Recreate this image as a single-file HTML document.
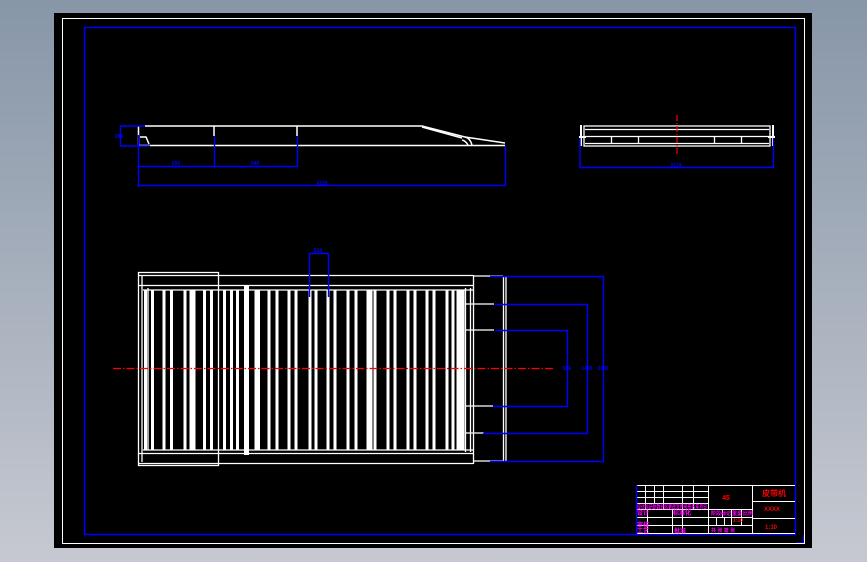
<!DOCTYPE html>
<html><head><meta charset="utf-8"><style>
html,body{margin:0;padding:0;width:867px;height:562px;overflow:hidden;background:linear-gradient(#8796a8,#c6c9d1);}
svg{position:absolute;left:0;top:0}
text{font-family:"Liberation Sans","Noto Sans CJK SC",sans-serif}
</style></head><body>
<svg width="867" height="562" viewBox="0 0 867 562">
<rect x="54" y="13" width="758" height="535" fill="#000"/>
<rect x="62.5" y="18.5" width="742" height="525" fill="none" stroke="#fff" stroke-width="1"/>
<rect x="84.5" y="27.5" width="711" height="507" fill="none" stroke="#0000ff" stroke-width="1.5"/>
<path d="M796 542.5H803.5V535" stroke="#00f" fill="none"/>

<!-- side view -->
<g stroke="#fff" fill="none" stroke-width="1.5">
<path d="M145 126H422L465 137L505 143"/>
<path d="M138 145.5H505M138.5 126V145M214 126V136M297 126V136"/>
<path d="M422 127L462 138M465 137Q470 138 472 145M462 140Q466 141 468 145M140 137H146L149 144"/>
</g>
<g stroke="#0000ff" fill="none" stroke-width="1.4">
<path d="M120 126H145M120 146H150M120.5 126V146"/>
<path d="M138.5 135V187M214.5 136V167M297.5 136V167M138 166.5H297M138 185.5H505M505.5 146V186"/>
</g>
<g fill="#0000ff" font-size="5" text-anchor="middle" font-weight="bold">
<text x="119" y="138">266</text><text x="176" y="165">650</text><text x="255" y="165">948</text><text x="322" y="185">4150</text>
</g>

<!-- end view -->
<g stroke="#fff" fill="none" stroke-width="1.3">
<rect x="584" y="126" width="186" height="20"/>
<path d="M585 129.5H769M585 136.5H769M585 143.5H769M611.5 136V143M638.5 136V143M714.5 136V143M741.5 136V143"/>
<path d="M581 125V146M773 125V146M579 137H586M768 137H775" stroke-width="2"/>
</g>
<path d="M677 115V155" stroke="#f00" stroke-width="1.2" stroke-dasharray="6,2,1,2"/>
<path d="M580 138V167.5H773.5V138" stroke="#00f" stroke-width="1.4" fill="none"/>
<text x="676" y="167" fill="#00f" font-size="5" text-anchor="middle" font-weight="bold">2174</text>

<!-- plan view -->
<g stroke="#fff" fill="none" stroke-width="1.3">
<rect x="138.5" y="272.5" width="80" height="193"/>
<path d="M138.5 275.5H473M138.5 285.5H473M138.5 453.5H473M138.5 463.5H473M473.5 275V464"/>
<path d="M142 276V462M148 288V450"/>
<path d="M143 290H473M143 450H473"/>
<path d="M473 276H503M473 461H503M465.5 288V452M470.5 288V452M503.5 276V461M506 276V461"/>
<path d="M465 304H494M465 330H494M465 406H493M465 433H484"/>
</g>
<g stroke="#fff" stroke-width="3">
<path d="M145.5 290V450M152.5 290V450M164 290V450M171.5 290V450M185 290V450M191 290V450M194 290V450M204.5 290V450M211.5 290V450M224.5 290V450M231.5 290V450M237.5 290V450M256 290V450M258.5 290V450M269 290V450M277 290V450M289 290V450M296 290V450M310 290V450M316 290V450M328 290V450M335 290V450M348 290V450M356 290V450M368 290V450M371 290V450M375 290V450M388 290V450M395 290V450M408 290V450M415 290V450M427 290V450M434 290V450M447 290V450M453 290V450M458 290V450M460.5 290V450M463 290V450"/>
<path d="M246.5 285V455" stroke-width="5"/>
</g>
<path d="M113 368.5H553" stroke="#f00" stroke-width="1.2" stroke-dasharray="8,2,1.5,2"/>
<g stroke="#0000ff" fill="none" stroke-width="1.4">
<path d="M490 276.5H603.5V461.5H490"/>
<path d="M495 304.5H587.5V433.5H483"/>
<path d="M495 330.5H567.5V406.5H493"/>
<path d="M309.5 297V253.5H328.5V297"/>
</g>
<g fill="#0000ff" font-size="5" text-anchor="middle" font-weight="bold">
<text x="567" y="370">556</text><text x="587" y="370">1465</text><text x="603" y="370">2300</text><text x="318" y="252">524</text>
</g>

<!-- title block -->
<g stroke="#fff" fill="none" stroke-width="1">
<path d="M636 485.5H795M636 533.5H795M708.5 485V533M752.5 485V533M752 501.5H795M752 518.5H795"/>
<path d="M708 509.5H752M708 517.5H752M708 525.5H752M722.5 509V517M731.5 509V525M741.5 509V525M716.5 517V525M724.5 517V525"/>
<path d="M636 491.5H708M636 497.5H708M636 503.5H708M636 509.5H708M636 517.5H708M636 525.5H708"/>
<path d="M645.5 485V509M654.5 485V503M663.5 485V509M682.5 485V533M693.5 485V509M647.5 509V533M672.5 509V533"/>
</g>
<path d="M636.5 485V534" stroke="#00f" stroke-width="1.5"/>
<g fill="#ff00ff" font-size="6" font-weight="bold">
<text x="637" y="509" textLength="70" lengthAdjust="spacingAndGlyphs">设计标记处数分区更改文件号签名年月日</text>
<text x="637" y="515">设计</text><text x="673" y="515">标准化</text>
<text x="637" y="527">审核</text><text x="637" y="533">工艺</text><text x="674" y="533">批准</text>
<text x="711" y="515" font-size="5">阶段标记</text><text x="732" y="515" font-size="5">重量</text><text x="743" y="515" font-size="5">比例</text>
<text x="711" y="532" font-size="5">共 张 第 张</text>
</g>
<g fill="#ff0000" font-weight="bold">
<text x="726" y="500" font-size="7" text-anchor="middle">45</text>
<text x="774" y="496" font-size="8" text-anchor="middle">皮带机</text>
<text x="772" y="511" font-size="6" text-anchor="middle">XXXX</text>
<text x="771" y="529" font-size="6" text-anchor="middle">1:10</text>
<text x="733" y="522" font-size="5">1:10</text>
</g>
</svg>
</body></html>
